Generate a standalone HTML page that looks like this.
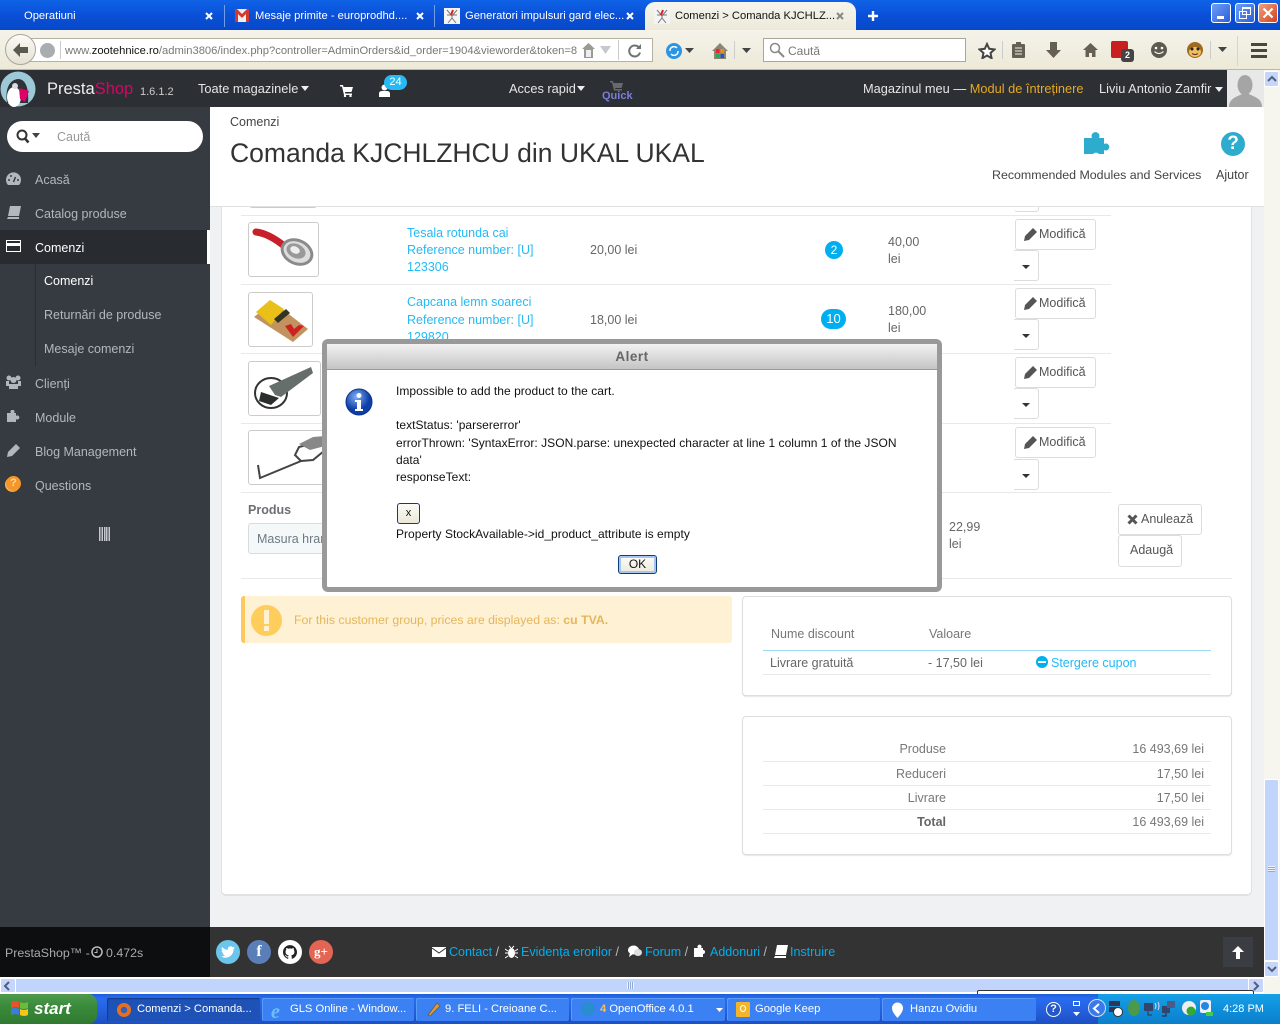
<!DOCTYPE html>
<html><head><meta charset="utf-8"><title>Comenzi &gt; Comanda KJCHLZHCU</title>
<style>
html,body{margin:0;padding:0;width:1280px;height:1024px;overflow:hidden;background:#eff1f2}
body{position:relative;font-family:"Liberation Sans",sans-serif;font-size:12.5px;color:#666}
.a,.t{position:absolute}
.t{white-space:nowrap;line-height:16px}
.tab{color:#fff;font-size:11.2px}
.side{color:#b3b7bd}
.hd{color:#e6e6e6;font-size:12.8px}
.lnk{color:#25b9f5}
.fl{color:#00aff0}
.fl span{color:#bbb}
.btn{position:absolute;background:#fff;border:1px solid #dcdcdc;border-radius:3px;box-sizing:border-box;color:#555;line-height:29px;white-space:nowrap;height:31px}
.img{position:absolute;background:#fff;border:1px solid #ccc;border-radius:3px;box-sizing:border-box}
.hr{position:absolute;height:1px;background:#e8e9ea}
.drop{position:absolute;background:#fff;border:1px solid #dcdcdc;border-left:0;border-radius:0 3px 3px 0;box-sizing:border-box;width:25px;height:31px}
.drop:after{content:"";position:absolute;left:8px;top:14px;border:4px solid transparent;border-top:4px solid #333;border-bottom:0}
.task{position:absolute;top:998px;height:23px;background:#3c81f3;border-radius:2px;color:#fff;font-size:11.2px;line-height:23px;box-sizing:border-box;box-shadow:inset 1px 1px 0 #5b9bf8;white-space:nowrap}
.dlg{color:#111;font-size:12px;letter-spacing:.03px}
.xpb{position:absolute;top:3px;width:20px;height:20px;border:1px solid #fff;border-radius:3px;box-sizing:border-box}
.car{position:absolute;border:4px solid transparent;border-top:5px solid #eee;border-bottom:0}
</style></head><body>

<!-- tab bar -->
<div class="a" style="left:0;top:0;width:1280px;height:30px;background:linear-gradient(#0f63e6,#0a50d8 50%,#0748c8)"></div>
<div class="t tab" style="left:24px;top:8px">Operatiuni</div>
<svg class="a" style="left:205px;top:12px" width="8" height="8"><path d="M1 1l6 6M7 1L1 7" stroke="#fff" stroke-width="2"/></svg>
<div class="a" style="left:224px;top:5px;width:1px;height:22px;background:#6f9fe8"></div>
<svg class="a" style="left:235px;top:9px" width="14" height="13"><rect width="14" height="13" fill="#eee"/><path d="M0 0h2l5 5 5-5h2v13h-3V5L7 9 3 5v8H0z" fill="#d23a2d"/></svg>
<div class="t tab" style="left:255px;top:8px">Mesaje primite - europrodhd....</div>
<svg class="a" style="left:416px;top:12px" width="8" height="8"><path d="M1 1l6 6M7 1L1 7" stroke="#fff" stroke-width="2"/></svg>
<div class="a" style="left:434px;top:5px;width:1px;height:22px;background:#6f9fe8"></div>
<svg class="a" style="left:444px;top:8px" width="16" height="16"><rect width="16" height="16" fill="#f4f4f4"/><path d="M3 2l5 6 5-6M8 8v2M4 15l4-5 4 5M3 7h10" stroke="#777" fill="none"/><path d="M9 2L7 7" stroke="#d22" stroke-width="2"/></svg>
<div class="t tab" style="left:465px;top:8px">Generatori impulsuri gard elec...</div>
<svg class="a" style="left:626px;top:12px" width="8" height="8"><path d="M1 1l6 6M7 1L1 7" stroke="#fff" stroke-width="2"/></svg>
<div class="a" style="left:645px;top:2px;width:211px;height:30px;background:linear-gradient(#f6f5ee,#ece9d8);border-radius:10px 10px 0 0"></div>
<svg class="a" style="left:654px;top:8px" width="16" height="16"><rect width="16" height="16" fill="#f4f4f4"/><path d="M3 2l5 6 5-6M8 8v2M4 15l4-5 4 5M3 7h10" stroke="#777" fill="none"/><path d="M9 2L7 7" stroke="#d22" stroke-width="2"/></svg>
<div class="t tab" style="left:675px;top:8px;color:#111">Comenzi &gt; Comanda KJCHLZ...</div>
<svg class="a" style="left:836px;top:12px" width="8" height="8"><path d="M1 1l6 6M7 1L1 7" stroke="#888" stroke-width="2"/></svg>
<svg class="a" style="left:867px;top:10px" width="12" height="12"><path d="M6 1v10M1 6h10" stroke="#fff" stroke-width="2.400"/></svg>
<div class="xpb" style="left:1211px;background:linear-gradient(135deg,#6e9ff5,#2a5fdc)"><div class="a" style="left:5px;top:12px;width:7px;height:3px;background:#fff"></div></div>
<div class="xpb" style="left:1235px;background:linear-gradient(135deg,#6e9ff5,#2a5fdc)"><div class="a" style="left:3px;top:7px;width:8px;height:8px;border:1px solid #fff;box-sizing:border-box"></div><div class="a" style="left:6px;top:3px;width:9px;height:8px;border:1px solid #fff;border-top-width:2px;box-sizing:border-box"></div></div>
<div class="xpb" style="left:1258px;background:linear-gradient(135deg,#f0a080,#d8401c)"><svg class="a" style="left:3px;top:3px" width="12" height="12"><path d="M1.500 1.500l9 9M10.500 1.500l-9 9" stroke="#fff" stroke-width="2.200"/></svg></div>

<!-- toolbar -->
<div class="a" style="left:0;top:30px;width:1280px;height:40px;background:linear-gradient(#f5f3ea,#ece9d8)"></div>
<div class="a" style="left:0;top:69px;width:1280px;height:1px;background:#bdb9a8"></div>
<div class="a" style="left:22px;top:38px;width:631px;height:24px;background:#fff;border:1px solid #b5b2a4;box-sizing:border-box"></div>
<div class="a" style="left:5px;top:34px;width:31px;height:31px;border-radius:50%;background:linear-gradient(#fbfaf5,#e5e2d4);border:1px solid #aaa69a;box-sizing:border-box"></div>
<svg class="a" style="left:12px;top:42px" width="17" height="16"><path d="M8 1L1 8l7 7v-4h8V5H8z" fill="#5a5a4e"/></svg>
<div class="a" style="left:40px;top:43px;width:15px;height:15px;border-radius:50%;background:#a9adb0"></div>
<div class="a" style="left:60px;top:41px;width:1px;height:18px;background:#ccc"></div>
<div class="t" style="left:65px;top:43px;font-size:11.2px;color:#777;width:512px;overflow:hidden">www.<span style="color:#111">zootehnice.ro</span>/admin3806/index.php?controller=AdminOrders&amp;id_order=1904&amp;vieworder&amp;token=84</div>
<svg class="a" style="left:581px;top:42px" width="15" height="17"><path d="M7.500 1L1 7h2v9h9V7h2z" fill="#9a9a90"/><rect x="5" y="8" width="5" height="7" fill="#eee"/></svg>
<svg class="a" style="left:600px;top:46px" width="11" height="9"><path d="M0 0h11L5.500 8z" fill="#c5c9cf"/></svg>
<div class="a" style="left:618px;top:40px;width:1px;height:20px;background:#ccc"></div>
<svg class="a" style="left:628px;top:44px" width="14" height="14"><path d="M11 3.500a5.500 5.500 0 1 0 1 5" stroke="#6e7475" stroke-width="2" fill="none"/><path d="M8 5h5V0z" fill="#6e7475"/></svg>
<div class="a" style="left:666px;top:43px;width:16px;height:16px;border-radius:50%;background:#2a95e5"></div>
<svg class="a" style="left:669px;top:46px" width="10" height="10"><path d="M8 2A4 4 0 0 0 1 5M2 8a4 4 0 0 0 7-3" stroke="#fff" stroke-width="1.500" fill="none"/></svg>
<svg class="a" style="left:685px;top:48px" width="9" height="5"><path d="M0 0h9L4.500 5z" fill="#444"/></svg>
<svg class="a" style="left:711px;top:42px" width="18" height="18"><path d="M9 1L1 9h2v8h12V9h2z" fill="#8b8576"/><rect x="5" y="7" width="3.500" height="4" fill="#e23"/><rect x="9.500" y="7" width="3.500" height="4" fill="#f80"/><rect x="5" y="12" width="3.500" height="4" fill="#2a5"/><rect x="9.500" y="12" width="3.500" height="4" fill="#25c"/></svg>
<div class="a" style="left:734px;top:41px;width:1px;height:18px;background:#ccc"></div>
<svg class="a" style="left:742px;top:48px" width="9" height="5"><path d="M0 0h9L4.500 5z" fill="#444"/></svg>
<div class="a" style="left:763px;top:38px;width:203px;height:24px;background:#fff;border:1px solid #aaa79a;box-sizing:border-box"></div>
<svg class="a" style="left:769px;top:42px" width="16" height="16"><circle cx="6" cy="6" r="4.500" stroke="#888" stroke-width="1.500" fill="none"/><path d="M9.500 9.500L15 15" stroke="#888" stroke-width="2"/></svg>
<div class="t" style="left:788px;top:43px;color:#777;font-size:12px">Caută</div>
<svg class="a" style="left:978px;top:42px" width="18" height="17"><path d="M9 2l2.200 4.800 5.300.6-4 3.600 1.100 5.200L9 13.500l-4.600 2.700L5.500 11l-4-3.600 5.300-.6z" fill="#fff" stroke="#444" stroke-width="2"/></svg>
<div class="a" style="left:1002px;top:41px;width:1px;height:18px;background:#ccc"></div>
<svg class="a" style="left:1011px;top:41px" width="15" height="18"><rect x="1" y="3" width="13" height="14" fill="#666052" rx="1"/><rect x="5" y="1" width="5" height="3" fill="#666052"/><path d="M4 7h7M4 10h7M4 13h7" stroke="#eee"/></svg>
<svg class="a" style="left:1046px;top:42px" width="15" height="16"><path d="M4 0h7v8h4l-7.500 8L0 8h4z" fill="#666052"/></svg>
<svg class="a" style="left:1083px;top:43px" width="15" height="14"><path d="M7.500 0L0 7h2.500v7h3.500v-4h3v4h3.500V7H15z" fill="#666052"/></svg>
<div class="a" style="left:1111px;top:41px;width:17px;height:17px;background:#c81f1f;border-radius:2px"></div>
<div class="a" style="left:1121px;top:49px;width:13px;height:13px;background:#444;border-radius:3px;color:#fff;font:bold 9px/13px 'Liberation Sans',sans-serif;text-align:center">2</div>
<svg class="a" style="left:1150px;top:41px" width="18" height="18"><circle cx="9" cy="9" r="8" fill="#5d5a4e"/><circle cx="6" cy="7" r="1.300" fill="#fff"/><circle cx="12" cy="7" r="1.300" fill="#fff"/><path d="M4.500 10.500q4.500 4 9 0" stroke="#fff" fill="none"/></svg>
<svg class="a" style="left:1186px;top:41px" width="18" height="18"><circle cx="9" cy="9" r="8" fill="#a06a1e"/><ellipse cx="9" cy="11" rx="6" ry="5" fill="#f0c060"/><circle cx="6" cy="8" r="1.500" fill="#222"/><circle cx="12" cy="8" r="1.500" fill="#222"/><path d="M6 12.500q3 2 6 0" stroke="#522" fill="none"/></svg>
<div class="a" style="left:1210px;top:41px;width:1px;height:18px;background:#ccc"></div>
<svg class="a" style="left:1218px;top:47px" width="9" height="5"><path d="M0 0h9L4.500 5z" fill="#444"/></svg>
<div class="a" style="left:1237px;top:36px;width:1px;height:30px;background:#d8d5c6"></div>
<div class="a" style="left:1251px;top:43px;width:16px;height:3px;background:#4a473c"></div>
<div class="a" style="left:1251px;top:49px;width:16px;height:3px;background:#4a473c"></div>
<div class="a" style="left:1251px;top:55px;width:16px;height:3px;background:#4a473c"></div>

<!-- content area -->
<div class="a" style="left:210px;top:107px;width:1054px;height:820px;background:#eff1f2"></div>
<div class="a" style="left:221px;top:206px;width:1031px;height:690px;background:#fff;border-right:1px solid #dfe1e3;border-left:1px solid #dfe1e3;border-bottom:2px solid #dfe1e3;border-radius:0 0 5px 5px;box-sizing:border-box"></div>

<!-- order rows -->
<div class="a" style="left:249px;top:200px;width:68px;height:8px;border:1px solid #ccc;border-top:0;border-radius:0 0 3px 3px;box-sizing:border-box"></div>
<div class="a" style="left:1014px;top:200px;width:25px;height:12px;border:1px solid #dcdcdc;border-left:0;border-top:0;border-radius:0 0 3px 3px;box-sizing:border-box"></div>
<div class="hr" style="left:241px;top:215px;width:870px"></div>
<div class="hr" style="left:241px;top:284px;width:870px"></div>
<div class="hr" style="left:241px;top:353px;width:870px"></div>
<div class="hr" style="left:241px;top:423px;width:870px"></div>
<div class="hr" style="left:241px;top:492px;width:870px"></div>
<div class="hr" style="left:241px;top:578px;width:991px"></div>

<div class="img" style="left:248px;top:222px;width:71px;height:55px"><svg width="69" height="53"><path d="M7 9c9 1 18 6 27 13" stroke="#c82028" stroke-width="7" fill="none" stroke-linecap="round"/><ellipse cx="48" cy="29" rx="17" ry="13" transform="rotate(25 48 29)" fill="#8a8a8a"/><ellipse cx="48" cy="29" rx="14" ry="10" transform="rotate(25 48 29)" fill="#ddd"/><ellipse cx="47" cy="28" rx="10" ry="7" transform="rotate(25 47 28)" fill="#999"/><ellipse cx="46" cy="27" rx="5" ry="3.500" transform="rotate(25 46 27)" fill="#eee"/></svg></div>
<div class="t lnk" style="left:407px;top:225px">Tesala rotunda cai</div>
<div class="t lnk" style="left:407px;top:242px">Reference number: [U]</div>
<div class="t lnk" style="left:407px;top:259px">123306</div>
<div class="t" style="left:590px;top:242px">20,00 lei</div>
<div class="a" style="left:825px;top:241px;width:18px;height:18px;border-radius:9px;background:#00aff0;color:#fff;font-size:12px;line-height:18px;text-align:center">2</div>
<div class="t" style="left:888px;top:234px">40,00</div><div class="t" style="left:888px;top:251px">lei</div>
<div class="btn" style="left:1015px;top:219px;width:81px;padding-left:23px"><svg class="a" style="left:8px;top:8px" width="13" height="13"><path d="M9 0l4 4-8 8-5 1 1-5z" fill="#555"/></svg>Modifică</div><div class="drop" style="left:1014px;top:250px"></div>

<div class="img" style="left:248px;top:292px;width:65px;height:55px"><svg width="63" height="53"><path d="M5 24L24 9l35 27-15 13z" fill="#c2935e"/><path d="M7 19L21 7l14 9-13 16z" fill="#e8c018"/><path d="M25 26l12-10 4 4-12 10z" fill="#332"/><path d="M36 33l8 11 11-11-5-1-5 4-3-5z" fill="#c22"/></svg></div>
<div class="t lnk" style="left:407px;top:294px">Capcana lemn soareci</div>
<div class="t lnk" style="left:407px;top:312px">Reference number: [U]</div>
<div class="t lnk" style="left:407px;top:329px">129820</div>
<div class="t" style="left:590px;top:312px">18,00 lei</div>
<div class="a" style="left:821px;top:309px;width:25px;height:20px;border-radius:10px;background:#00aff0;color:#fff;font-size:13px;line-height:20px;text-align:center">10</div>
<div class="t" style="left:888px;top:303px">180,00</div><div class="t" style="left:888px;top:320px">lei</div>
<div class="btn" style="left:1015px;top:288px;width:81px;padding-left:23px"><svg class="a" style="left:8px;top:8px" width="13" height="13"><path d="M9 0l4 4-8 8-5 1 1-5z" fill="#555"/></svg>Modifică</div><div class="drop" style="left:1014px;top:319px"></div>

<div class="img" style="left:248px;top:361px;width:73px;height:55px"><svg width="71" height="53"><ellipse cx="22" cy="31" rx="16" ry="15" stroke="#333" stroke-width="2" fill="none"/><path d="M20 24L62 5l2 6-32 24-6-2z" fill="#666e6c"/><path d="M12 30l18 6-8 7-12-4z" fill="#2a2e2e"/></svg></div>
<div class="btn" style="left:1015px;top:357px;width:81px;padding-left:23px"><svg class="a" style="left:8px;top:8px" width="13" height="13"><path d="M9 0l4 4-8 8-5 1 1-5z" fill="#555"/></svg>Modifică</div><div class="drop" style="left:1014px;top:388px"></div>

<div class="img" style="left:248px;top:430px;width:78px;height:55px"><svg width="76" height="53"><path d="M9 34l2 13 41-17-6-6 4-8 12-3M52 30l12-1 11-9" stroke="#444" stroke-width="2" fill="none"/><path d="M50 13l14-7 12-1v10l-15 4z" fill="#888"/></svg></div>
<div class="btn" style="left:1015px;top:427px;width:81px;padding-left:23px"><svg class="a" style="left:8px;top:8px" width="13" height="13"><path d="M9 0l4 4-8 8-5 1 1-5z" fill="#555"/></svg>Modifică</div><div class="drop" style="left:1014px;top:459px"></div>

<div class="t" style="left:248px;top:502px;font-weight:bold;color:#6c6f74">Produs</div>
<div class="a" style="left:248px;top:523px;width:90px;height:31px;background:#f5f8f9;border:1px solid #d6dde0;border-radius:3px;box-sizing:border-box"></div>
<div class="t" style="left:257px;top:531px;width:66px;overflow:hidden;color:#6c7a85">Masura hrana</div>
<div class="t" style="left:949px;top:519px">22,99</div><div class="t" style="left:949px;top:536px">lei</div>
<div class="btn" style="left:1118px;top:504px;width:84px;padding-left:22px"><svg class="a" style="left:8px;top:9px" width="11" height="11"><path d="M1.500 1.500l8 8M9.500 1.500l-8 8" stroke="#555" stroke-width="3"/></svg>Anulează</div>
<div class="btn" style="left:1118px;top:535px;width:64px;height:32px;padding-left:11px">Adaugă</div>

<!-- warning -->
<div class="a" style="left:241px;top:596px;width:491px;height:47px;background:#fff1d3;border-left:4px solid #fdc85e;border-radius:3px;box-sizing:border-box"></div>
<div class="a" style="left:251px;top:605px;width:31px;height:31px;border-radius:50%;background:#fecd5c"></div>
<div class="a" style="left:264px;top:610px;width:5px;height:14px;background:#fff1d3"></div>
<div class="a" style="left:264px;top:626px;width:5px;height:5px;background:#fff1d3"></div>
<div class="t" style="left:294px;top:612px;color:#e5b65c;font-size:12.3px">For this customer group, prices are displayed as: <b>cu TVA.</b></div>

<!-- discount panel -->
<div class="a" style="left:742px;top:596px;width:490px;height:100px;background:#fff;border:1px solid #dcdee0;border-radius:4px;box-shadow:0 1px 1px #e4e6e8;box-sizing:border-box"></div>
<div class="t" style="left:771px;top:626px;color:#777">Nume discount</div>
<div class="t" style="left:929px;top:626px;color:#777">Valoare</div>
<div class="a" style="left:763px;top:650px;width:448px;height:1px;background:#9ed8f5"></div>
<div class="t" style="left:770px;top:655px">Livrare gratuită</div>
<div class="t" style="left:928px;top:655px">- 17,50 lei</div>
<div class="a" style="left:1036px;top:656px;width:12px;height:12px;border-radius:50%;background:#00aff0"></div>
<div class="a" style="left:1038px;top:661px;width:8px;height:2px;background:#fff"></div>
<div class="t lnk" style="left:1051px;top:655px">Stergere cupon</div>
<div class="hr" style="left:763px;top:674px;width:448px"></div>

<!-- totals panel -->
<div class="a" style="left:742px;top:716px;width:490px;height:139px;background:#fff;border:1px solid #dcdee0;border-radius:4px;box-shadow:0 1px 1px #e4e6e8;box-sizing:border-box"></div>
<div class="t" style="right:334px;top:741px;color:#777">Produse</div><div class="t" style="right:76px;top:741px;color:#777">16 493,69 lei</div>
<div class="hr" style="left:763px;top:761px;width:448px"></div>
<div class="t" style="right:334px;top:766px;color:#777">Reduceri</div><div class="t" style="right:76px;top:766px;color:#777">17,50 lei</div>
<div class="hr" style="left:763px;top:785px;width:448px"></div>
<div class="t" style="right:334px;top:790px;color:#777">Livrare</div><div class="t" style="right:76px;top:790px;color:#777">17,50 lei</div>
<div class="hr" style="left:763px;top:809px;width:448px"></div>
<div class="t" style="right:334px;top:814px;font-weight:bold;color:#666">Total</div><div class="t" style="right:76px;top:814px;color:#777">16 493,69 lei</div>
<div class="hr" style="left:763px;top:833px;width:448px"></div>

<!-- page head -->
<div class="a" style="left:210px;top:107px;width:1054px;height:99px;background:#fff;border-bottom:1px solid #dfe1e3"></div>
<div class="t" style="left:230px;top:114px;color:#444">Comenzi</div>
<div class="t" style="left:230px;top:137px;font-size:26.5px;line-height:32px;color:#333">Comanda KJCHLZHCU din UKAL UKAL</div>
<svg class="a" style="left:1084px;top:130px" width="27" height="25"><path d="M0 8h8a4 4 0 1 1 7 0h5v6a3.500 3.500 0 1 1 0 6v4h-5a4 4 0 0 0-6 0H0z" fill="#2eacce"/></svg>
<div class="t" style="left:992px;top:167px;color:#444;font-size:12.4px">Recommended Modules and Services</div>
<div class="a" style="left:1221px;top:132px;width:24px;height:24px;border-radius:50%;background:#2eacce;color:#fff;font:bold 19px/24px 'Liberation Sans',sans-serif;text-align:center">?</div>
<div class="t" style="left:1216px;top:167px;color:#444">Ajutor</div>

<!-- header -->
<div class="a" style="left:0;top:70px;width:1264px;height:37px;background:#2c2f34"></div>
<svg class="a" style="left:0;top:71px" width="36" height="36"><circle cx="18" cy="18" r="17.500" fill="#9cc8d8"/><path d="M7 32c-2-14 2-23 11-24 8 0 11 10 10 24z" fill="#2f3236"/><ellipse cx="14" cy="26" rx="7" ry="10" fill="#fff"/><circle cx="15" cy="15" r="3" fill="#ddd"/><path d="M19 17l10 3-4 11-5-3z" fill="#df0067"/></svg>
<div class="t" style="left:47px;top:80px;font-size:16.500px;line-height:18px;color:#eee">Presta<span style="color:#df0067">Shop</span></div>
<div class="t" style="left:140px;top:84px;font-size:11px;color:#ccc">1.6.1.2</div>
<div class="t hd" style="left:198px;top:81px">Toate magazinele</div>
<div class="car" style="left:301px;top:86px"></div>
<svg class="a" style="left:340px;top:84px" width="13" height="13"><path d="M0 1h3l.500 2H13l-1.500 5H5l.300 1.500H12V11H4L2 2.500H0z" fill="#fff"/><circle cx="5" cy="12" r="1.200" fill="#fff"/><circle cx="10.500" cy="12" r="1.200" fill="#fff"/></svg>
<svg class="a" style="left:379px;top:84px" width="11" height="13"><circle cx="5.500" cy="3.500" r="3" fill="#fff"/><path d="M0 13V9a3 3 0 0 1 3-2h5a3 3 0 0 1 3 2v4z" fill="#fff"/></svg>
<div class="a" style="left:384px;top:75px;width:23px;height:15px;border-radius:8px;background:#25b9f5;color:#fff;font-size:11px;line-height:15px;text-align:center">24</div>
<div class="t hd" style="left:509px;top:81px">Acces rapid</div>
<div class="car" style="left:577px;top:86px"></div>
<svg class="a" style="left:610px;top:81px" width="13" height="12"><path d="M0 0h3l.500 2H13l-1.500 5H5l.300 1H12v1.500H4L2 1.500H0z" fill="#666a70"/></svg>
<div class="t" style="left:602px;top:89px;font-size:11px;font-weight:bold;line-height:14px;color:#7a7fd8">Quick</div>
<div class="t hd" style="left:863px;top:81px">Magazinul meu <span style="color:#eee">—</span> <span style="color:#e8a920">Modul de întreținere</span></div>
<div class="t hd" style="left:1099px;top:81px">Liviu Antonio Zamfir</div>
<div class="car" style="left:1215px;top:87px"></div>
<div class="a" style="left:1227px;top:70px;width:37px;height:37px;background:#e8e8e8;overflow:hidden"><svg width="37" height="37"><ellipse cx="18" cy="15" rx="7.500" ry="10" fill="#a5a5a5"/><path d="M2 37c0-9 8-10 13-13h7c5 3 13 4 13 13z" fill="#a5a5a5"/></svg></div>

<!-- sidebar -->
<div class="a" style="left:0;top:107px;width:210px;height:820px;background:#363a41"></div>
<div class="a" style="left:7px;top:121px;width:196px;height:31px;background:#fff;border-radius:16px"></div>
<svg class="a" style="left:15px;top:129px" width="26" height="15"><circle cx="7" cy="6" r="4.500" stroke="#333" stroke-width="2" fill="none"/><path d="M10 9.500l3.500 4" stroke="#333" stroke-width="2.500"/><path d="M17 4h8l-4 5z" fill="#444"/></svg>
<div class="t" style="left:57px;top:129px;color:#999">Caută</div>

<svg class="a" style="left:6px;top:172px" width="15" height="14"><path d="M2 13a7.500 7.500 0 1 1 11 0z" fill="#b3b7bd"/><path d="M7.500 10l2-5" stroke="#363a41" stroke-width="1.500"/><circle cx="3" cy="8" r="1" fill="#363a41"/><circle cx="12" cy="8" r="1" fill="#363a41"/><circle cx="5" cy="4" r="1" fill="#363a41"/></svg>
<div class="t side" style="left:35px;top:172px">Acasă</div>
<svg class="a" style="left:7px;top:206px" width="14" height="14"><path d="M3 0h11l-2 10H1z" fill="#b3b7bd"/><path d="M1 11h11v2H0z" fill="#b3b7bd"/></svg>
<div class="t side" style="left:35px;top:206px">Catalog produse</div>
<div class="a" style="left:0;top:230px;width:207px;height:34px;background:#282b30"></div>
<div class="a" style="left:207px;top:230px;width:3px;height:34px;background:#fff"></div>
<div class="a" style="left:6px;top:240px;width:15px;height:12px;border:1px solid #fff;box-sizing:border-box"><div class="a" style="left:0;top:2px;width:13px;height:3px;background:#fff"></div></div>
<div class="t side" style="left:35px;top:240px;color:#fff">Comenzi</div>
<div class="a" style="left:35px;top:264px;width:1px;height:102px;background:#2a2d32"></div>
<div class="t side" style="left:44px;top:273px;color:#fff">Comenzi</div>
<div class="t side" style="left:44px;top:307px">Returnări de produse</div>
<div class="t side" style="left:44px;top:341px">Mesaje comenzi</div>
<svg class="a" style="left:6px;top:375px" width="15" height="15"><circle cx="3" cy="3" r="2.500" fill="#b3b7bd"/><circle cx="12" cy="3" r="2.500" fill="#b3b7bd"/><circle cx="7.500" cy="5" r="3" fill="#b3b7bd"/><path d="M0 6h3v5H0zM12 6h3v5h-3zM3 9h9v5H3z" fill="#b3b7bd"/></svg>
<div class="t side" style="left:35px;top:376px">Clienți</div>
<svg class="a" style="left:7px;top:410px" width="14" height="13"><path d="M0 3h4a2 2 0 1 1 3 0h2v3a2 2 0 1 1 0 3v3H6a2 2 0 0 0-2 0H0z" fill="#b3b7bd"/></svg>
<div class="t side" style="left:35px;top:410px">Module</div>
<svg class="a" style="left:7px;top:444px" width="13" height="13"><path d="M9 0l4 4-8 8-5 1 1-5z" fill="#b3b7bd"/></svg>
<div class="t side" style="left:35px;top:444px">Blog Management</div>
<div class="a" style="left:6px;top:476px;width:15px;height:15px;border-radius:50%;background:#f5962a;color:#ffd9a0;font:bold 11px/15px 'Liberation Sans',sans-serif;text-align:center;box-shadow:-1px 1px 0 #f7b45a">?</div>
<div class="t side" style="left:35px;top:478px">Questions</div>
<div class="a" style="left:99px;top:527px;width:11px;height:14px;background:repeating-linear-gradient(90deg,#c5c8cc 0 1.500px,#363a41 1.500px 2.400px)"></div>

<!-- footer -->
<div class="a" style="left:0;top:927px;width:210px;height:50px;background:#0c0e10"></div>
<div class="a" style="left:210px;top:927px;width:1054px;height:50px;background:#333"></div>
<div class="t" style="left:5px;top:945px;color:#aaa;font-size:12.400px">PrestaShop™ -</div>
<svg class="a" style="left:91px;top:946px" width="12" height="12"><circle cx="6" cy="6" r="5" stroke="#bbb" stroke-width="1.500" fill="none"/><path d="M6 3v3.500H3.500" stroke="#bbb" fill="none"/></svg>
<div class="t" style="left:106px;top:945px;color:#aaa;font-size:12.400px">0.472s</div>
<div class="a" style="left:216px;top:940px;width:24px;height:24px;border-radius:50%;background:#6cc5ea"></div>
<svg class="a" style="left:221px;top:945px" width="14" height="14" viewBox="0 0 24 24"><path fill="#fff" d="M23.953 4.57a10 10 0 01-2.825.775 4.958 4.958 0 002.163-2.723c-.951.555-2.005.959-3.127 1.184a4.92 4.92 0 00-8.384 4.482C7.69 8.095 4.067 6.13 1.64 3.162a4.822 4.822 0 00-.666 2.475c0 1.71.87 3.213 2.188 4.096a4.904 4.904 0 01-2.228-.616v.06a4.923 4.923 0 003.946 4.827 4.996 4.996 0 01-2.212.085 4.936 4.936 0 004.604 3.417 9.867 9.867 0 01-6.102 2.105c-.39 0-.779-.023-1.17-.067a13.995 13.995 0 007.557 2.209c9.053 0 13.998-7.496 13.998-13.985 0-.21 0-.42-.015-.63A9.935 9.935 0 0024 4.59z"/></svg>
<div class="a" style="left:247px;top:940px;width:24px;height:24px;border-radius:50%;background:#5a7fb8;color:#fff;font:bold 16px/24px 'Liberation Serif',serif;text-align:center">f</div>
<div class="a" style="left:278px;top:940px;width:24px;height:24px;border-radius:50%;background:#fff"></div>
<svg class="a" style="left:283px;top:945px" width="14" height="14" viewBox="0 0 24 24"><path fill="#222" d="M12 .297c-6.63 0-12 5.373-12 12 0 5.303 3.438 9.8 8.205 11.385.6.113.82-.258.82-.577 0-.285-.01-1.04-.015-2.04-3.338.724-4.042-1.61-4.042-1.61C4.422 18.07 3.633 17.7 3.633 17.7c-1.087-.744.084-.729.084-.729 1.205.084 1.838 1.236 1.838 1.236 1.07 1.835 2.809 1.305 3.495.998.108-.776.417-1.305.76-1.605-2.665-.3-5.466-1.332-5.466-5.93 0-1.31.465-2.38 1.235-3.22-.135-.303-.54-1.523.105-3.176 0 0 1.005-.322 3.3 1.23.96-.267 1.98-.399 3-.405 1.02.006 2.04.138 3 .405 2.28-1.552 3.285-1.23 3.285-1.23.645 1.653.24 2.873.12 3.176.765.84 1.23 1.91 1.23 3.22 0 4.61-2.805 5.625-5.475 5.92.42.36.81 1.096.81 2.22 0 1.606-.015 2.896-.03 3.286 0 .315.21.69.825.57C20.565 22.092 24 17.592 24 12.297c0-6.627-5.373-12-12-12"/></svg>
<div class="a" style="left:309px;top:940px;width:24px;height:24px;border-radius:50%;background:#e56554;color:#fff;font:bold 13px/24px 'Liberation Serif',serif;text-align:center">g+</div>
<div class="a" style="left:432px;top:947px;width:14px;height:10px;background:#fff"></div>
<svg class="a" style="left:432px;top:947px" width="14" height="10"><path d="M0 1l7 5 7-5" stroke="#333" fill="none"/></svg>
<div class="t fl" style="left:449px;top:944px">Contact <span>/</span></div>
<svg class="a" style="left:505px;top:945px" width="13" height="14"><ellipse cx="6.500" cy="8" rx="3.500" ry="5" fill="#fff"/><path d="M0 4l3 2M13 4l-3 2M0 8h3M13 8h-3M0 13l3-2M13 13l-3-2M4 1l2 2M9 1L7 3" stroke="#fff"/></svg>
<div class="t fl" style="left:521px;top:944px">Evidența erorilor <span>/</span></div>
<svg class="a" style="left:628px;top:945px" width="14" height="13"><ellipse cx="5.500" cy="5" rx="5.500" ry="4.500" fill="#fff"/><path d="M2 8l-1 4 4-3z" fill="#fff"/><ellipse cx="10" cy="7.500" rx="4" ry="3.500" fill="#ddd"/></svg>
<div class="t fl" style="left:645px;top:944px">Forum <span>/</span></div>
<svg class="a" style="left:694px;top:944px" width="14" height="13"><path d="M0 4h4a2 2 0 1 1 3 0h2v2a2 2 0 1 1 0 4v3H6a2 2 0 0 0-2 0H0z" fill="#fff"/></svg>
<div class="t fl" style="left:710px;top:944px">Addonuri <span>/</span></div>
<svg class="a" style="left:774px;top:945px" width="14" height="13"><path d="M3 0h11l-2 10H1z" fill="#fff"/><path d="M1 11h11v2H0z" fill="#fff"/></svg>
<div class="t fl" style="left:790px;top:944px">Instruire</div>
<div class="a" style="left:1223px;top:937px;width:30px;height:30px;background:#3a3d42"></div>
<svg class="a" style="left:1232px;top:946px" width="12" height="13"><path d="M6 0l6 6H8v7H4V6H0z" fill="#fff"/></svg>

<!-- vertical scrollbar -->
<div class="a" style="left:1264px;top:70px;width:16px;height:924px;background:#f6f5ee"></div>
<div class="a" style="left:1264px;top:71px;width:15px;height:16px;background:#c5d6fa;border:1px solid #fff;border-radius:2px;box-sizing:border-box"></div>
<svg class="a" style="left:1267px;top:75px" width="10" height="8"><path d="M1 6l4-4 4 4" stroke="#4d6185" stroke-width="2" fill="none"/></svg>
<div class="a" style="left:1264px;top:779px;width:15px;height:182px;background:#c1d4fb;border:1px solid #fff;border-radius:2px;box-sizing:border-box"></div>
<div class="a" style="left:1268px;top:866px;width:7px;height:6px;background:repeating-linear-gradient(#eef3fe 0 1px,#90a8d8 1px 2px)"></div>
<div class="a" style="left:1264px;top:961px;width:15px;height:16px;background:#c5d6fa;border:1px solid #fff;border-radius:2px;box-sizing:border-box"></div>
<svg class="a" style="left:1267px;top:965px" width="10" height="8"><path d="M1 2l4 4 4-4" stroke="#4d6185" stroke-width="2" fill="none"/></svg>

<!-- horizontal scrollbar -->
<div class="a" style="left:0;top:977px;width:1264px;height:17px;background:#fff"></div>
<div class="a" style="left:0;top:978px;width:1264px;height:15px;background:#c1d4fb;border:1px solid #fff;box-sizing:border-box"></div>
<div class="a" style="left:0;top:978px;width:16px;height:15px;background:#c5d6fa;border:1px solid #fff;border-radius:2px;box-sizing:border-box"></div>
<svg class="a" style="left:3px;top:981px" width="8" height="10"><path d="M6 1L2 5l4 4" stroke="#4d6185" stroke-width="2" fill="none"/></svg>
<div class="a" style="left:627px;top:982px;width:7px;height:7px;background:repeating-linear-gradient(90deg,#eef3fe 0 1px,#90a8d8 1px 2px)"></div>
<div class="a" style="left:1248px;top:978px;width:16px;height:15px;background:#c5d6fa;border:1px solid #fff;border-radius:2px;box-sizing:border-box"></div>
<svg class="a" style="left:1252px;top:981px" width="8" height="10"><path d="M2 1l4 4-4 4" stroke="#4d6185" stroke-width="2" fill="none"/></svg>
<div class="a" style="left:977px;top:990px;width:277px;height:4px;background:#fff;border:1px solid #333;border-bottom:0;border-radius:2px 2px 0 0;box-sizing:border-box"></div>

<!-- taskbar -->
<div class="a" style="left:0;top:994px;width:1280px;height:30px;background:linear-gradient(#1f5ed8,#2a6cf0 15%,#245edb 60%,#1c4fc4)"></div>
<div class="a" style="left:0;top:994px;width:97px;height:30px;background:linear-gradient(#4f9a4c,#3b8b3c 40%,#2f7a30);border-radius:0 9px 9px 0"></div>
<svg class="a" style="left:10px;top:999px" width="20" height="20"><path d="M1 3q4-2 8 0v6q-4-2-8 0z" fill="#e8522b"/><path d="M10 3q4 2 8 0v6q-4 2-8 0z" fill="#6dbb3a"/><path d="M1 10q4-2 8 0v6q-4-2-8 0z" fill="#3a7de0"/><path d="M10 10q4 2 8 0v6q-4 2-8 0z" fill="#f5c518"/></svg>
<div class="t" style="left:34px;top:1001px;color:#fff;font-size:17px;font-weight:bold;font-style:italic">start</div>
<div class="task" style="left:107px;width:153px;padding-left:30px;background:#1e52b7;box-shadow:inset 1px 1px 1px #123a8a">Comenzi &gt; Comanda...</div>
<div class="a" style="left:117px;top:1003px;width:14px;height:14px;border-radius:50%;background:radial-gradient(#3860b8 30%,#e8701c 35%)"></div>
<div class="task" style="left:262px;width:152px;padding-left:28px">GLS Online - Window...</div>
<div class="t" style="left:271px;top:1001px;font:italic bold 20px 'Liberation Serif',serif;color:#6dc0f5">e</div>
<div class="task" style="left:416px;width:153px;padding-left:29px">9. FELI - Creioane C...</div>
<svg class="a" style="left:426px;top:1002px" width="15" height="15"><path d="M2 13L11 1l3 3L4 14z" fill="#d99a3a" stroke="#654" stroke-width=".7"/></svg>
<div class="task" style="left:571px;width:154px;padding-left:29px"><span style="color:#f5c058;font-weight:bold">4</span> OpenOffice 4.0.1</div>
<div class="a" style="left:581px;top:1002px;width:14px;height:14px;border-radius:50%;background:#2a8dd0"></div>
<svg class="a" style="left:716px;top:1008px" width="7" height="4"><path d="M0 0h7L3.500 4z" fill="#fff"/></svg>
<div class="task" style="left:727px;width:153px;padding-left:28px">Google Keep</div>
<div class="a" style="left:736px;top:1002px;width:14px;height:15px;background:#f5b52a;border-radius:1px"></div>
<div class="a" style="left:740px;top:1005px;width:6px;height:7px;border:1px solid #fff;border-radius:50%;box-sizing:border-box"></div>
<div class="task" style="left:882px;width:154px;padding-left:28px">Hanzu Ovidiu</div>
<svg class="a" style="left:891px;top:1002px" width="13" height="17"><path d="M6.500 16C3 12 1 9 1 6a5.500 5.500 0 0 1 11 0c0 3-2 6-5.500 10z" fill="#fff"/></svg>
<div class="a" style="left:1046px;top:1002px;width:15px;height:15px;border-radius:50%;background:#2458c8;border:1px solid #fff;box-sizing:border-box;color:#fff;font:bold 11px/13px 'Liberation Sans',sans-serif;text-align:center">?</div>
<div class="a" style="left:1073px;top:1001px;width:7px;height:5px;border:1px solid #fff;box-sizing:border-box"></div>
<svg class="a" style="left:1073px;top:1012px" width="7" height="4"><path d="M0 0h7L3.500 4z" fill="#fff"/></svg>

<!-- tray -->
<div class="a" style="left:1098px;top:994px;width:182px;height:30px;background:linear-gradient(#16a0e6,#0f8fdb 50%,#0c7fca)"></div>
<div class="a" style="left:1088px;top:999px;width:18px;height:18px;border-radius:50%;background:#3a7ae8;border:1px solid #cfe0fb;box-sizing:border-box"></div>
<svg class="a" style="left:1092px;top:1003px" width="9" height="11"><path d="M7 1L2 5.500 7 10" stroke="#fff" stroke-width="2" fill="none"/></svg>
<svg class="a" style="left:1106px;top:1000px" width="115" height="18"><rect x="3" y="1" width="11" height="5" fill="#335"/><rect x="3" y="7" width="8" height="5" fill="#335"/><circle cx="12" cy="12" r="4.500" fill="#fff" stroke="#333"/><ellipse cx="28" cy="8" rx="6" ry="8" fill="#4a9a4a"/><rect x="38" y="3" width="9" height="8" fill="#34446a"/><path d="M42 11v4h4" stroke="#334" fill="none"/><path d="M49 3q2 3 0 6M52 2q2 4 0 8" stroke="#dde" fill="none"/><rect x="56" y="6" width="8" height="7" fill="#34446a"/><rect x="61" y="1" width="8" height="7" fill="#4a5c8a"/><path d="M60 13v3h-4" stroke="#223" fill="none"/><circle cx="83" cy="8" r="7" fill="#eee"/><circle cx="85" cy="11" r="4.500" fill="#3a3"/><rect x="94" y="0" width="11" height="13" fill="#eef" rx="2"/><circle cx="99" cy="6" r="4" fill="#28d"/><rect x="100" y="12" width="7" height="4" fill="#4c4"/></svg>
<div class="t" style="left:1223px;top:1001px;color:#fff;font-size:11px">4:28 PM</div>

<!-- dialog -->
<div class="a" style="left:322px;top:339px;width:620px;height:253px;background:#fff;border:5px solid #999;border-radius:6px;box-sizing:border-box"></div>
<div class="a" style="left:327px;top:344px;width:610px;height:26px;background:linear-gradient(#f2f2f2,#c4c4c4);border-bottom:1px solid #999;box-sizing:border-box;color:#666;font:bold 13.500px/26px 'Liberation Sans',sans-serif;text-align:center;letter-spacing:.5px">Alert</div>
<svg class="a" style="left:345px;top:388px" width="28" height="28"><defs><radialGradient id="bl" cx=".4" cy=".3"><stop offset="0" stop-color="#7fb0f5"/><stop offset="1" stop-color="#0e3ea8"/></radialGradient></defs><circle cx="14" cy="14" r="13" fill="url(#bl)" stroke="#0b2f8a"/><circle cx="14" cy="7.500" r="2.500" fill="#fff"/><path d="M10 12h6v9h2v2h-8v-2h2v-7h-2z" fill="#fff"/></svg>
<div class="t dlg" style="left:396px;top:383px">Impossible to add the product to the cart.</div>
<div class="t dlg" style="left:396px;top:417px">textStatus: 'parsererror'</div>
<div class="t dlg" style="left:396px;top:435px">errorThrown: 'SyntaxError: JSON.parse: unexpected character at line 1 column 1 of the JSON</div>
<div class="t dlg" style="left:396px;top:452px">data'</div>
<div class="t dlg" style="left:396px;top:469px">responseText:</div>
<div class="a" style="left:397px;top:503px;width:23px;height:21px;background:linear-gradient(#fbfbf8,#ece9d8);border:1px solid #0b3f78;border-radius:3px;box-sizing:border-box;font:11px/18px 'Liberation Sans',sans-serif;color:#111;text-align:center">x</div>
<div class="t dlg" style="left:396px;top:526px">Property StockAvailable-&gt;id_product_attribute is empty</div>
<div class="a" style="left:618px;top:555px;width:39px;height:19px;background:linear-gradient(#fdfdfb,#ece9d8);border:1px solid #0b3f78;border-radius:3px;box-sizing:border-box;box-shadow:inset 0 0 0 2px #a8c4f0;font:12px/17px 'Liberation Sans',sans-serif;color:#111;text-align:center">OK</div>
</body></html>
